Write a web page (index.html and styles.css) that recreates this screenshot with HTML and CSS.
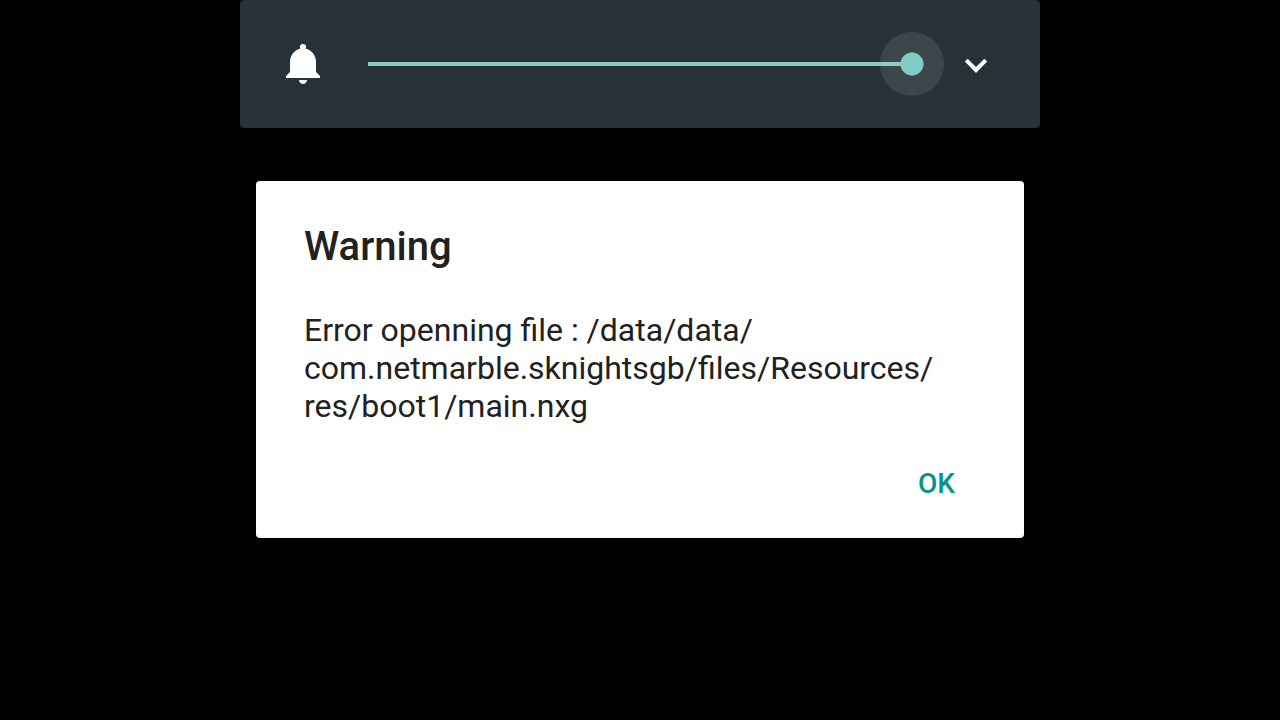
FILE: index.html
```html
<!DOCTYPE html>
<html lang="en">
<head>
  <meta charset="UTF-8">
  <meta name="viewport" content="width=device-width, initial-scale=1.0">
  <link rel="stylesheet" href="styles.css">

  <title>Warning</title>

</head>
<body>
  <section class="volume-panel">
    <svg class="bell" viewBox="0 0 48 48" aria-hidden="true">
      <path d="M23 44c2.200 0 4-1.800 4-4h-8c0 2.200 1.800 4 4 4z"/>
      <path d="M36 32V22c0-6.400-4-11.600-10-13.200V7a3 3 0 0 0-6 0v1.800C14 10.400 10 15.600 10 22v10l-4 4v2h34v-2z"/>
    </svg>
    <input type="range" class="volume-slider" min="0" max="100" value="100" aria-label="Ring volume">
    <button type="button" class="expand-button" aria-label="Expand">
      <svg viewBox="0 0 48 48" aria-hidden="true">
        <path d="M15.700 18.800L24 27l8.300-8.200 2.900 2.800L24 33 12.800 21.600z"/>
      </svg>
    </button>
  </section>

  <main class="dialog" role="alertdialog" aria-labelledby="dialog-title" aria-describedby="dialog-message">
    <h1 id="dialog-title">Warning</h1>
    <p id="dialog-message">Error openning file : /data/data/<wbr>com.netmarble.sknightsgb/files/Resources/<wbr>res/boot1/main.nxg</p>
    <div class="dialog-actions">
      <button type="button" class="ok-button">OK</button>
    </div>
  </main>
</body>
</html>
```
FILE: styles.css
```css
:root {
  --color-panel: #263238;
  --color-accent: #80cbc4;
  --color-teal: #009688;
  --color-text: #212121;
  --color-white: #ffffff;
}

* {
  margin: 0;
  padding: 0;
  box-sizing: border-box;
}

body {
  display: flex;
  flex-direction: column;
  align-items: center;
  min-height: 100vh;
  background-color: #000000;
  font-family: Roboto, sans-serif;
  color: var(--color-text);
}

button {
  font-family: inherit;
  border: none;
  background: none;
  cursor: pointer;
}

svg {
  display: block;
  fill: var(--color-white);
}

.volume-panel {
  display: flex;
  align-items: center;
  width: 100%;
  max-width: 800px;
  height: 128px;
  padding: 0 40px;
  border-radius: 4px;
  background-color: var(--color-panel);
}

.bell {
  flex: none;
  width: 48px;
  height: 48px;
  margin-right: 40px;
}

.volume-slider {
  appearance: none;
  flex: 1;
  min-width: 0;
  height: 64px;
  margin-right: 8px;
  background: linear-gradient(var(--color-accent), var(--color-accent)) left center / calc(100% - 32px) 4px no-repeat;
  outline: none;
}

.volume-slider::-webkit-slider-thumb {
  appearance: none;
  width: 64px;
  height: 64px;
  border-radius: 50%;
  background: radial-gradient(circle, var(--color-accent) 11px, rgba(255, 255, 255, 0.1) 12px);
}

.expand-button svg {
  width: 48px;
  height: 48px;
}

.dialog {
  width: calc(100% - 32px);
  max-width: 768px;
  margin-top: 53px;
  padding: 40px 48px 24px;
  border-radius: 4px;
  background-color: var(--color-white);
}

.dialog h1 {
  font-size: 40px;
  font-weight: 500;
  line-height: 52px;
}

.dialog p {
  margin-top: 38px;
  font-size: 32px;
  line-height: 38px;
}

.dialog-actions {
  display: flex;
  justify-content: flex-end;
  margin-top: 27px;
}

.ok-button {
  height: 62px;
  padding: 0 21px;
  font-size: 28px;
  font-weight: 500;
  color: var(--color-teal);
}
```
